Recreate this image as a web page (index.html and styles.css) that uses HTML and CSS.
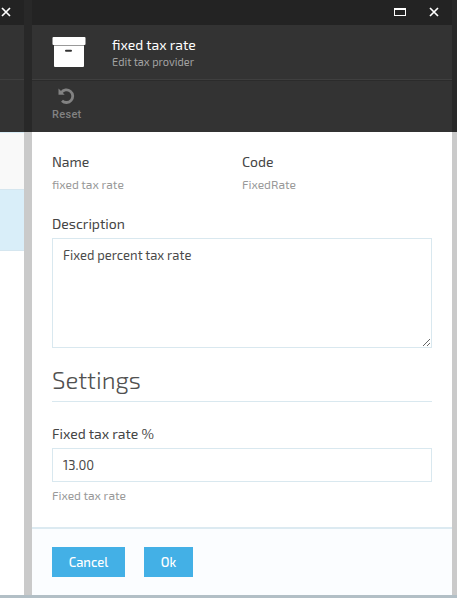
FILE: index.html
```html
<!DOCTYPE html>
<html lang="en">
<head>
<meta charset="utf-8">
<title>Edit tax provider</title>
<link rel="stylesheet" href="styles.css">
</head>
<body>
<div class="workspace">
  <aside class="previous">
    <div class="previous-top"><svg class="close" viewBox="0 0 10 10"><path d="M1 1l8 8M9 1L1 9"/></svg></div>
    <div class="previous-head"></div>
    <div class="previous-tools"></div>
    <div class="row row-muted"></div>
    <div class="row row-selected"></div>
  </aside>
  <div class="gutter"></div>
  <main class="blade">
    <div class="titlebar">
      <svg class="maximize" viewBox="0 0 12 8"><path d="M0 0h12v8H0zM1 2v5h10V2z" fill-rule="evenodd"/></svg>
      <svg class="close" viewBox="0 0 10 10"><path d="M1 1l8 8M9 1L1 9"/></svg>
    </div>
    <header class="head">
      <svg class="archive" viewBox="0 0 34 30"><rect x=".5" width="33" height="8" rx="1"/><path fill-rule="evenodd" d="M2 8.6h30v20.4q0 1-1 1H3q-1 0-1-1zM14 12.7q-1 0-1 1t1 1h5q1 0 1-1t-1-1z"/></svg>
      <div class="headings"><h1>fixed tax rate</h1><p>Edit tax provider</p></div>
    </header>
    <div class="toolbar">
      <button class="tool">
        <svg viewBox="0 0 17 16"><path class="arc" d="M3.3 4.5A6.3 6.3 0 1 1 4 12.7"/><path class="tip" d="M.5 .5v6.2h6.2z"/></svg>
        <span>Reset</span>
      </button>
    </div>
    <section class="content">
      <div class="pair">
        <div><div class="label">Name</div><div class="value">fixed tax rate</div></div>
        <div><div class="label">Code</div><div class="value">FixedRate</div></div>
      </div>
      <label class="label" for="description">Description</label>
      <textarea id="description">Fixed percent tax rate</textarea>
      <h2>Settings</h2>
      <label class="label rate" for="rate">Fixed tax rate %</label>
      <input id="rate" value="13.00">
      <div class="hint">Fixed tax rate</div>
    </section>
    <footer class="actions"><button class="btn cancel">Cancel</button><button class="btn ok">Ok</button></footer>
  </main>
  <div class="gutter"></div>
</div>
<div class="scrollbar"></div>
</body>
</html>
```
FILE: styles.css
```css
* { box-sizing: border-box; }
body { margin: 0; width: 457px; height: 598px; overflow: hidden; background: #fff; font-family: "Exo 2", "Open Sans", sans-serif; color: #444; }
h1, h2, p { margin: 0; font-weight: 400; }
button, input, textarea { font-family: inherit; margin: 0; border-radius: 0; outline: 0; }
.workspace { display: grid; grid-template-columns: 24px 8px 420px 5px; height: 595px; }
.scrollbar { height: 3px; background: #b2bfc6; }
.gutter { background: linear-gradient(#282828 132px, #cacaca 132px); }
.close { width: 10px; height: 10px; flex: none; fill: none; stroke: #fff; stroke-width: 1.7; }
.previous-top { height: 25px; background: #232323; padding: 7px 0 0 1px; }
.previous-top .close { display: block; }
.previous-head { height: 55px; background: #333; border-bottom: 1px solid #3f3f3f; }
.previous-tools { height: 52px; background: #333; }
.row-muted { height: 57px; background: #f9f9f9; border-top: 1px solid #d9edf7; }
.row-selected { height: 62px; background: #d9eef9; border: solid #d5e6ef; border-width: 1px 0; }
.blade { display: flex; flex-direction: column; background: #fff; }
.titlebar { height: 25px; flex: none; background: #232323; display: flex; justify-content: flex-end; align-items: flex-start; gap: 23px; padding: 7px 13px 0 0; }
.maximize { width: 12px; height: 8px; margin-top: 1px; fill: #fff; }
.head { height: 55px; flex: none; background: #333; border-bottom: 1px solid #3f3f3f; display: flex; align-items: flex-start; gap: 26px; padding: 12px 20px 0; }
.archive { width: 34px; height: 30px; fill: #fff; }
.headings { margin-top: -1px; }
.headings h1 { height: 18px; font-size: 14px; line-height: 17px; color: #fff; }
.headings p { font-size: 11px; line-height: 15px; color: #a3a3a3; }
.toolbar { height: 52px; flex: none; background: #333; border-top: 1px solid #2b2b2b; padding: 7px 20px 0; }
.tool { display: block; width: 30px; padding: 0; border: 0; background: none; color: #828282; font: 500 11px/14px Roboto, sans-serif; text-align: left; letter-spacing: .3px; }
.tool svg { display: block; width: 17px; height: 16px; margin: 0 0 4px 6px; }
.tool span { display: block; }
.arc { fill: none; stroke: #828282; stroke-width: 2.8; }
.tip { fill: #828282; }
.content { height: 395px; flex: none; padding: 20px 20px 0; }
.pair { display: grid; grid-template-columns: 190px 190px; height: 62px; }
.label { display: block; height: 24px; font-size: 14px; line-height: 20px; color: #454545; }
.value { font-size: 12px; line-height: 18px; height: 18px; margin-top: -1px; color: #999; }
textarea { display: block; width: 380px; height: 110px; padding: 7px 10px; border: 1px solid #d9e8ef; resize: both; background: #fff; color: #4a4a4a; font-size: 13px; line-height: 18px; }
h2 { height: 54px; padding-top: 15px; border-bottom: 1px solid #d9e8ef; font-size: 24px; line-height: 34px; font-weight: 300; color: #505050; }
.rate { margin-top: 22px; }
input { display: block; width: 380px; height: 34px; padding: 0 10px; border: 1px solid #d9e8ef; color: #4a4a4a; font-size: 13px; }
.hint { margin-top: 4px; font-size: 12px; line-height: 18px; color: #999; }
.actions { height: 68px; flex: none; border-top: 2px solid #dceaf1; background: #fbfdff; display: flex; gap: 19px; padding: 18px 20px 0; }
.btn { height: 30px; padding: 0; border: 0; background: #43b0e6; color: #fff; font-size: 13px; font-weight: 500; }
.cancel { width: 73px; }
.ok { width: 49px; }
```
